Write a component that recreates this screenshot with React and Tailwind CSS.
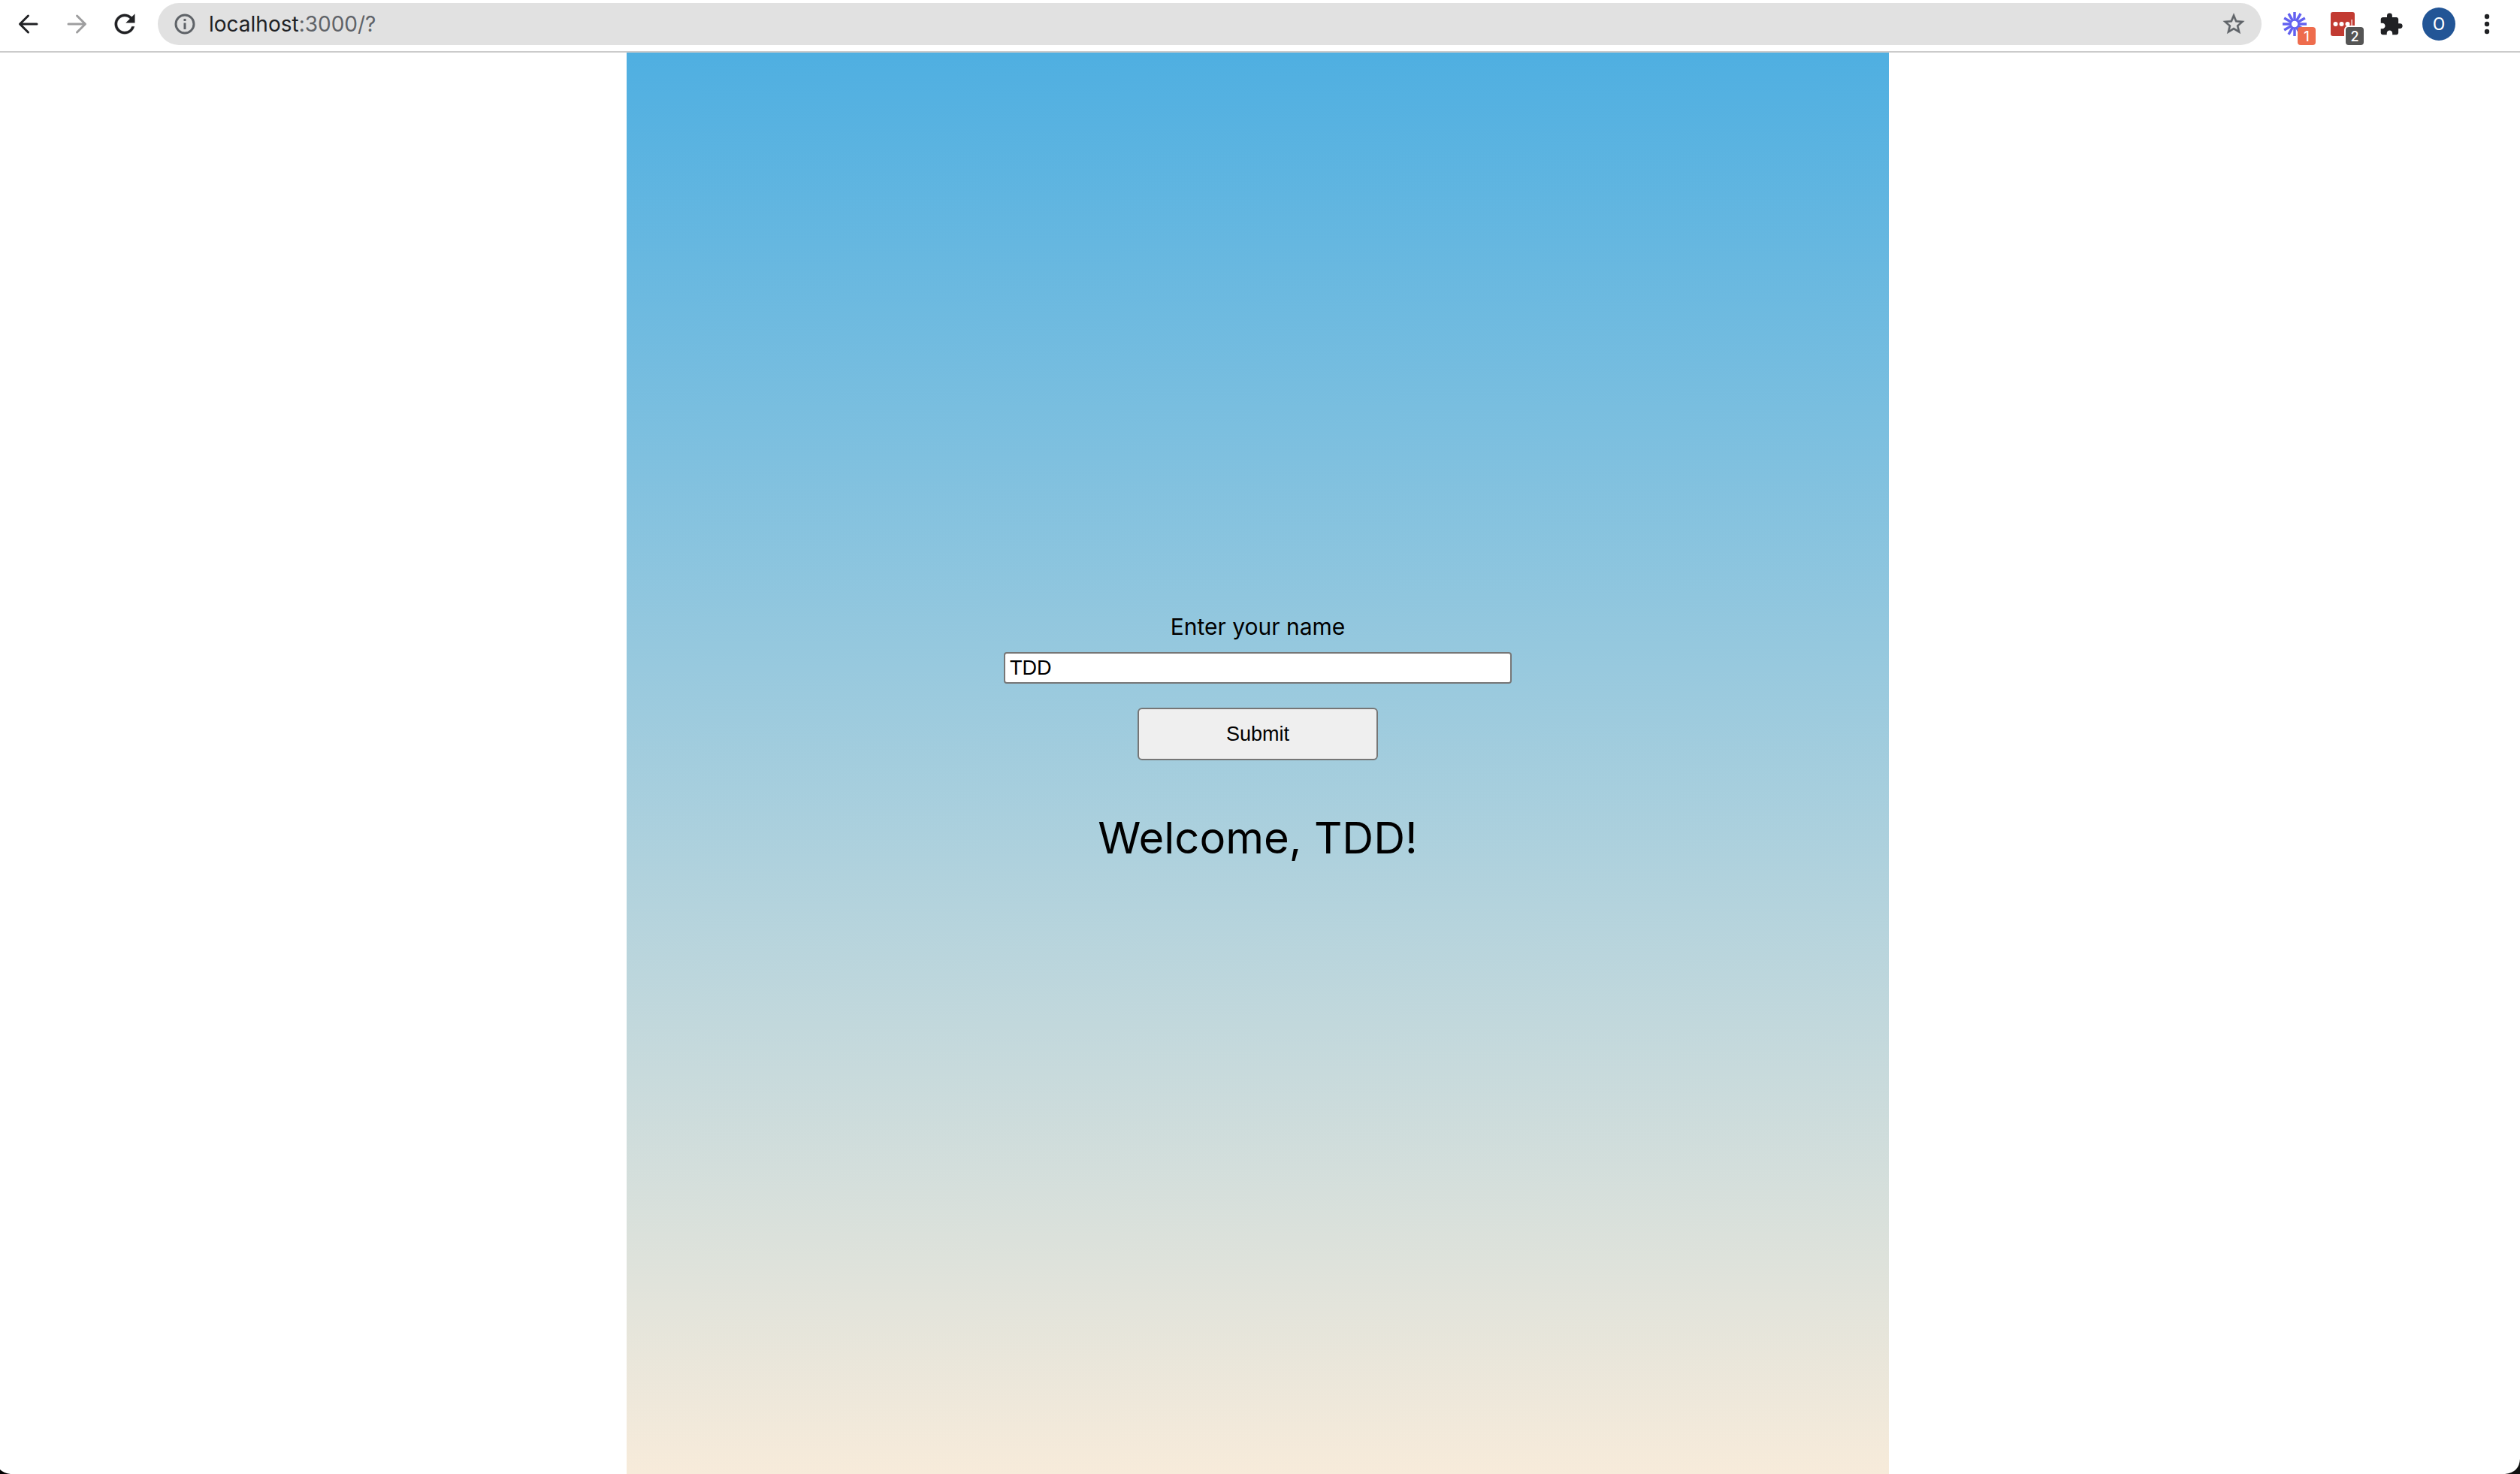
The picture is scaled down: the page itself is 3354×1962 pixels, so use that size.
import { useState } from "react";
import { MdExtension } from "react-icons/md";

function ArrowIcon({ className }) {
  return (
    <svg viewBox="0 0 40 40" className={className} fill="none" stroke="currentColor" strokeWidth="3" strokeLinecap="round" strokeLinejoin="round">
      <path d="M31 20H9M19.500 9L8.500 20L19.500 31" />
    </svg>
  );
}

function ReloadIcon() {
  return (
    <svg viewBox="0 0 24 24" className="size-10" fill="currentColor" stroke="currentColor" strokeWidth="0.200">
      <path d="M17.650 6.350A7.958 7.958 0 0 0 12 4c-4.420 0-7.990 3.580-7.990 8s3.570 8 7.990 8c3.730 0 6.840-2.550 7.730-6h-2.080A5.990 5.990 0 0 1 12 18c-3.310 0-6-2.690-6-6s2.690-6 6-6c1.660 0 3.140.690 4.220 1.780L13 11h7V4l-2.350 2.350z" />
    </svg>
  );
}

function InfoIcon() {
  return (
    <svg viewBox="0 0 32 32" className="size-8" fill="none" stroke="currentColor" strokeWidth="3">
      <circle cx="16" cy="16" r="12" />
      <path d="M16 14.500V23M16 9V12" />
    </svg>
  );
}

function StarIcon() {
  return (
    <svg viewBox="0 0 24 24" className="size-[34px]" fill="currentColor" stroke="currentColor" strokeWidth="0.300">
      <path d="M22 9.240l-7.190-.620L12 2 9.190 8.630 2 9.240l5.460 4.730L5.820 21 12 17.270 18.180 21l-1.630-7.030L22 9.240zM12 15.400l-3.760 2.270 1-4.280-3.320-2.880 4.380-.380L12 6.100l1.710 4.040 4.380.380-3.320 2.880 1 4.280L12 15.400z" />
    </svg>
  );
}

function BurstIcon() {
  const angles = [0, 30, 60, 90, 120, 150, 180, 210, 240, 270, 300, 330];
  return (
    <svg viewBox="0 0 32 32" className="size-8" stroke="#6361f0" strokeWidth="3.500">
      {angles.map((a) => (
        <line key={a} x1="16" y1="0" x2="16" y2="11.500" transform={`rotate(${a} 16 16)`} />
      ))}
      <circle cx="16" cy="16" r="5" fill="#fff" strokeWidth="1.600" />
    </svg>
  );
}

function PasswordIcon() {
  return (
    <svg viewBox="0 0 32 32" className="size-8">
      <rect width="32" height="32" rx="3" fill="#c23b32" />
      <circle cx="6.500" cy="16" r="3" fill="#fff" />
      <circle cx="14.500" cy="16" r="3" fill="#fff" />
      <circle cx="22.500" cy="16" r="3" fill="#fff" />
      <rect x="27.500" y="10" width="1.200" height="10" fill="#fff" />
    </svg>
  );
}

function ToolButton({ label, children }) {
  return (
    <button type="button" aria-label={label} className="flex h-14 w-16 shrink-0 items-center justify-center">
      {children}
    </button>
  );
}

function Toolbar() {
  return (
    <header className="flex items-center border-b-2 border-[#cbcbcb] bg-white pt-1 pr-3 pb-2 pl-[6px] text-[#202124]">
      <nav className="flex pr-3">
        <ToolButton label="Back">
          <ArrowIcon className="size-10" />
        </ToolButton>
        <ToolButton label="Forward">
          <ArrowIcon className="size-10 rotate-180 text-[#9e9e9f]" />
        </ToolButton>
        <ToolButton label="Reload">
          <ReloadIcon />
        </ToolButton>
      </nav>
      <div className="flex h-14 flex-1 items-center rounded-full bg-[#e1e1e1] px-5 text-[#5f6368]">
        <InfoIcon />
        <p className="flex-1 pl-4 font-['Inter',sans-serif] text-[28px] leading-8">
          <span className="text-[#202124]">localhost</span>:3000/?
        </p>
        <button type="button" aria-label="Bookmark this page">
          <StarIcon />
        </button>
      </div>
      <div className="flex pl-3">
        <ToolButton label="Meeting extension">
          <span className="relative">
            <BurstIcon />
            <span className="absolute top-5 left-5 flex size-6 items-center justify-center rounded bg-[#ee6c4d] font-['Inter',sans-serif] text-[18px] font-medium text-white">1</span>
          </span>
        </ToolButton>
        <ToolButton label="Password extension">
          <span className="relative">
            <PasswordIcon />
            <span className="absolute top-5 left-5 flex size-6 items-center justify-center rounded bg-[#555] font-['Inter',sans-serif] text-[18px] font-medium text-white ring-2 ring-white">2</span>
          </span>
        </ToolButton>
        <ToolButton label="Extensions">
          <MdExtension className="size-[33px]" />
        </ToolButton>
        <ToolButton label="Profile">
          <span className="flex size-11 items-center justify-center rounded-full bg-[#225596] font-['Roboto',sans-serif] text-[24px] text-white">O</span>
        </ToolButton>
        <ToolButton label="Menu">
          <svg viewBox="0 0 8 28" className="h-7 w-2" fill="currentColor">
            <circle cx="4" cy="4" r="3.200" />
            <circle cx="4" cy="14" r="3.200" />
            <circle cx="4" cy="24" r="3.200" />
          </svg>
        </ToolButton>
      </div>
    </header>
  );
}

export default function App() {
  const [name, setName] = useState("TDD");
  const [greeted, setGreeted] = useState("TDD");

  function handleSubmit(event) {
    event.preventDefault();
    setGreeted(name);
  }

  return (
    <div className="relative flex min-h-screen flex-col bg-white">
      <Toolbar />
      <main className="flex flex-1 justify-center pr-[6px]">
        <section className="flex w-full max-w-[1680px] flex-col items-center justify-center bg-linear-to-b/srgb from-[#4fafe1] to-[#f7ebda] pb-16 font-['Inter',sans-serif] text-black">
          <form onSubmit={handleSubmit} className="flex w-[676px] flex-col items-center">
            <label htmlFor="name" className="pb-[14px] text-[30px] leading-10">
              Enter your name
            </label>
            <input
              id="name"
              type="text"
              value={name}
              onChange={(event) => setName(event.target.value)}
              className="h-[42px] w-full rounded border-2 border-[#767676] bg-white px-[6px] font-['Liberation_Sans',sans-serif] text-[27px] leading-8 outline-none"
            />
            <button type="submit" className="mt-8 h-[70px] w-80 rounded-md border-2 border-[#767676] bg-[#efefef] font-['Liberation_Sans',sans-serif] text-[27px] leading-8">
              Submit
            </button>
          </form>
          <p className="pt-16 text-[58px] leading-[78px]">Welcome, {greeted}!</p>
        </section>
      </main>
      <svg viewBox="0 0 14 6" className="absolute bottom-0 left-0 h-[6px] w-[14px]">
        <path d="M0 0Q5 5 14 6H0Z" fill="#000" />
      </svg>
      <svg viewBox="0 0 20 20" className="absolute right-0 bottom-0 size-5">
        <path d="M20 0Q19 18 0 20H20Z" fill="#111" />
      </svg>
    </div>
  );
}
